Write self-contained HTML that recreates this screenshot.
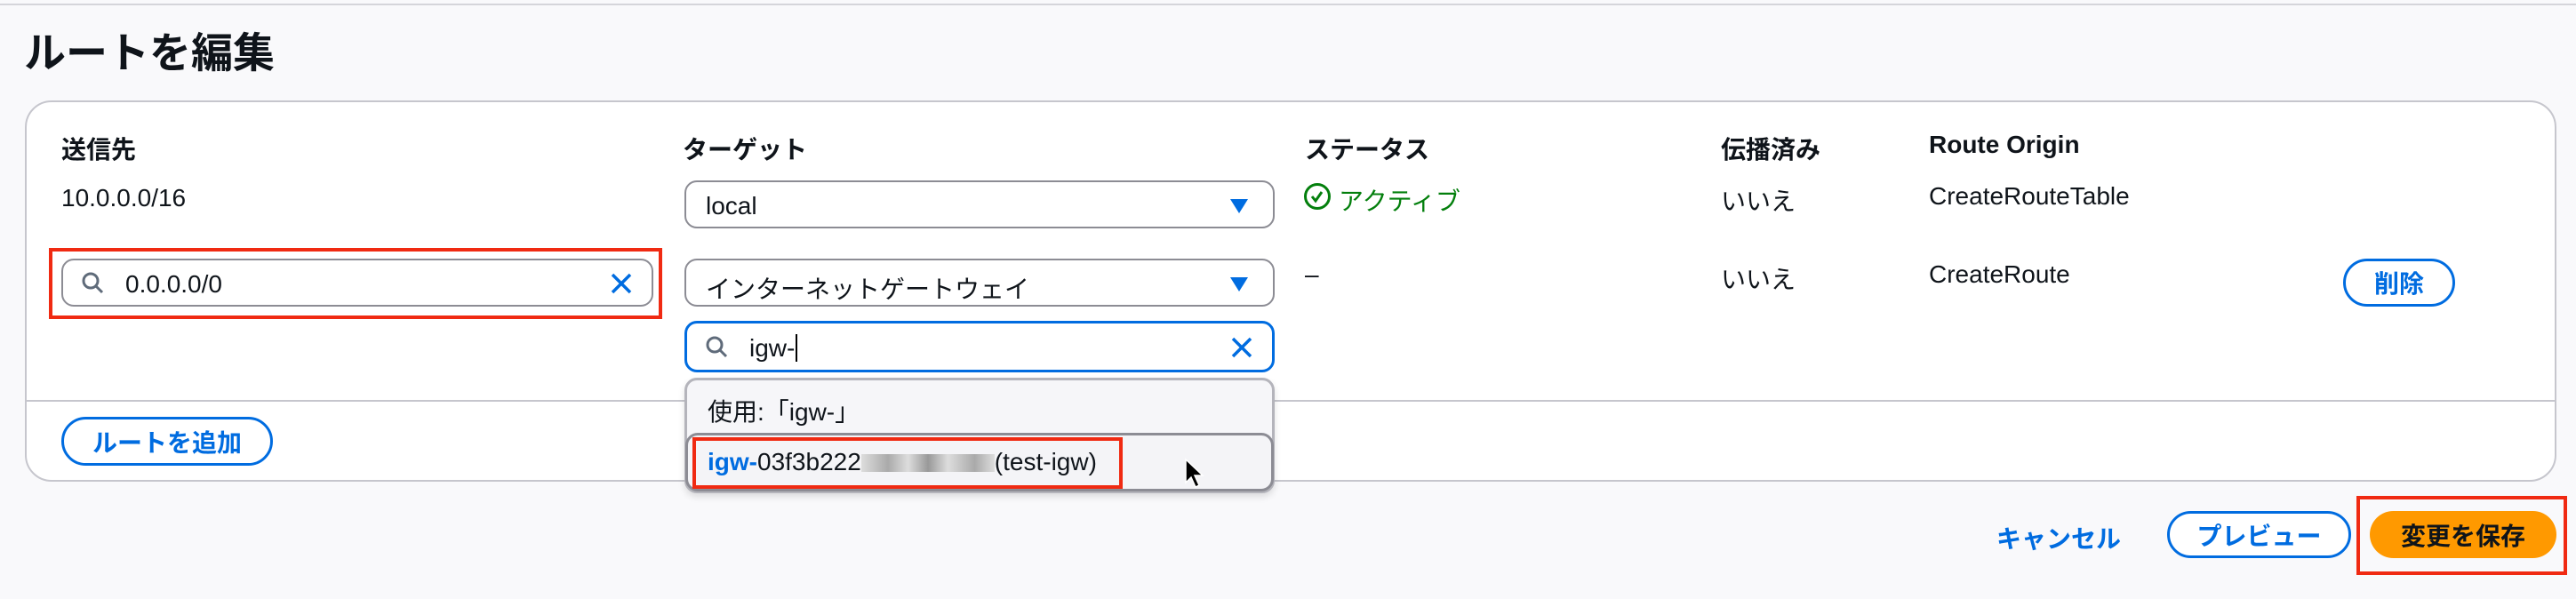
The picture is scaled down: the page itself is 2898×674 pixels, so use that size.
<!DOCTYPE html>
<html><head><meta charset="utf-8"><style>
*{box-sizing:border-box;margin:0;padding:0}
body{width:2898px;height:674px;background:#f9f9fb;font-family:"Liberation Sans","Noto Sans CJK JP",sans-serif;color:#0f141a;position:relative;overflow:hidden;font-size:28px}
.a{position:absolute;white-space:nowrap}
.b{font-weight:bold}
.inp{position:absolute;background:#fff;border:2px solid #8c8c94;border-radius:14px;height:54px}
.tri{position:absolute;right:28px;top:19px;width:0;height:0;border-left:10px solid transparent;border-right:10px solid transparent;border-top:16px solid #006ce0}
.btn{position:absolute;border:3px solid #006ce0;border-radius:30px;color:#006ce0;font-weight:bold;display:flex;align-items:center;justify-content:center;background:#fff}
.red{position:absolute;border:4px solid #f02a12}
</style></head><body>
<div class="a" style="left:0;top:4px;width:2898px;height:2px;background:#d5d5da"></div>
<div class="a b" style="left:27px;top:21px;font-size:47px">ルートを編集</div>
<div class="a" style="left:28px;top:113px;width:2848px;height:429px;background:#fff;border:2px solid #c6c6cd;border-radius:30px"></div>
<div class="a" style="left:29px;top:450px;width:2846px;height:2px;background:#c6c6cd"></div>

<div class="a b" style="left:69px;top:147px">送信先</div>
<div class="a b" style="left:768px;top:147px">ターゲット</div>
<div class="a b" style="left:1468px;top:147px">ステータス</div>
<div class="a b" style="left:1936px;top:147px">伝播済み</div>
<div class="a b" style="left:2170px;top:147px">Route Origin</div>

<div class="a" style="left:69px;top:207px">10.0.0.0/16</div>
<div class="inp" style="left:770px;top:203px;width:664px"><div class="a" style="left:22px;top:11px">local</div><div class="tri"></div></div>
<div class="a" style="left:1467px;top:206px;width:30px;height:30px;border:3px solid #037f0c;border-radius:50%"><svg width="24" height="24" viewBox="0 0 24 24" style="position:absolute;left:0;top:0"><path d="M6 12l4 5 7-10" fill="none" stroke="#037f0c" stroke-width="3"/></svg></div>
<div class="a" style="left:1506px;top:205px;color:#037f0c">アクティブ</div>
<div class="a" style="left:1936px;top:205px">いいえ</div>
<div class="a" style="left:2170px;top:205px">CreateRouteTable</div>

<div class="red" style="left:55px;top:279px;width:690px;height:80px"></div>
<div class="inp" style="left:69px;top:291px;width:666px">
<svg class="a" style="left:20px;top:12px" width="28" height="28" viewBox="0 0 28 28"><circle cx="11" cy="11" r="8" fill="none" stroke="#5f6b7a" stroke-width="3"/><path d="M17 17l7 7" stroke="#5f6b7a" stroke-width="3"/></svg>
<div class="a" style="left:70px;top:11px">0.0.0.0/0</div>
<svg class="a" style="right:20px;top:12px" width="28" height="28" viewBox="0 0 28 28"><path d="M4 4l20 20M24 4L4 24" stroke="#006ce0" stroke-width="3.5"/></svg></div>
<div class="inp" style="left:770px;top:291px;width:664px"><div class="a" style="left:22px;top:11px">インターネットゲートウェイ</div><div class="tri"></div></div>
<div class="a" style="left:1468px;top:293px">–</div>
<div class="a" style="left:1936px;top:293px">いいえ</div>
<div class="a" style="left:2170px;top:293px">CreateRoute</div>
<div class="btn" style="left:2636px;top:291px;width:126px;height:54px">削除</div>

<div class="inp" style="left:770px;top:361px;width:664px;height:58px;border:3px solid #006ce0">
<svg class="a" style="left:20px;top:13px" width="28" height="28" viewBox="0 0 28 28"><circle cx="11" cy="11" r="8" fill="none" stroke="#5f6b7a" stroke-width="3"/><path d="M17 17l7 7" stroke="#5f6b7a" stroke-width="3"/></svg>
<div class="a" style="left:70px;top:12px">igw-<span style="border-left:2px solid #000;margin-left:1px"></span></div>
<svg class="a" style="right:20px;top:13px" width="28" height="28" viewBox="0 0 28 28"><path d="M4 4l20 20M24 4L4 24" stroke="#006ce0" stroke-width="3.5"/></svg></div>

<div class="a" style="left:770px;top:425px;width:664px;height:130px;background:#f6f6f9;border:3px solid #b4b4bb;border-radius:14px;box-shadow:0 4px 8px rgba(0,0,0,.12)"></div>
<div class="a" style="left:796px;top:442px">使用:「igw-」</div>
<div class="a" style="left:771px;top:487px;width:662px;height:66px;border:3px solid #8c8c94;border-radius:14px;background:#f4f4f7"></div>
<div class="red" style="left:779px;top:492px;width:484px;height:58px"></div>
<div class="a" style="left:796px;top:504px"><span class="b" style="color:#006ce0">igw-</span>03f3b222<span style="display:inline-block;width:150px;height:20px;background:linear-gradient(90deg,#ddd,#aaa 20%,#ddd 35%,#999 50%,#ddd 65%,#aaa 85%,#ddd);vertical-align:-2px"></span>(test-igw)</div>
<svg class="a" style="left:1332px;top:515px" width="24" height="36" viewBox="0 0 24 36"><path d="M2 2v26l6-6 5 11 4-2-5-11h9z" fill="#000" stroke="#fff" stroke-width="1.5"/></svg>

<div class="btn" style="left:69px;top:469px;width:238px;height:55px">ルートを追加</div>

<div class="a b" style="left:2246px;top:585px;color:#006ce0">キャンセル</div>
<div class="btn" style="left:2438px;top:575px;width:207px;height:53px">プレビュー</div>
<div class="red" style="left:2651px;top:558px;width:237px;height:89px"></div>
<div class="a b" style="left:2666px;top:575px;width:210px;height:53px;background:#ff9900;border-radius:30px;display:flex;align-items:center;justify-content:center">変更を保存</div>
</body></html>
